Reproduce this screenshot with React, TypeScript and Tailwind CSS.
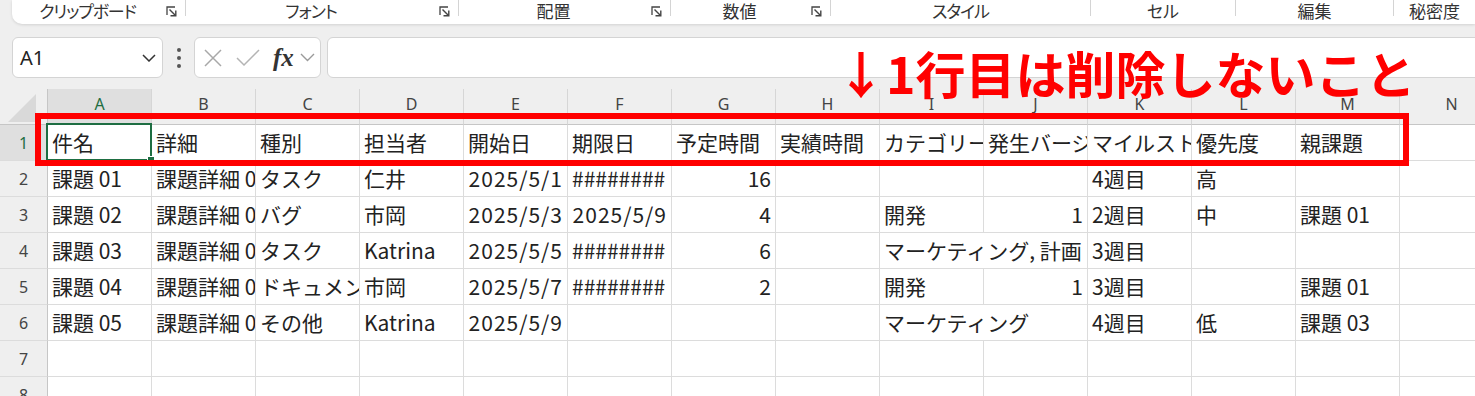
import React from "react";

type Cell = { t?: string; r?: boolean; span?: number; n?: boolean };

const COLS = ["A", "B", "C", "D", "E", "F", "G", "H", "I", "J", "K", "L", "M", "N"];
const H = "########";

const c = (t = "", r = false, span = 1): Cell => ({ t, r, span });
const d = (t: string): Cell => ({ t, r: true, span: 1, n: true });

const ROWS: Cell[][] = [
  [c("件名"), c("詳細"), c("種別"), c("担当者"), c("開始日"), c("期限日"), c("予定時間"), c("実績時間"), c("カテゴリー"), c("発生バージョン"), c("マイルストーン"), c("優先度"), c("親課題"), c()],
  [c("課題 01"), c("課題詳細 01"), c("タスク"), c("仁井"), d("2025/5/1"), c(H), c("16", true), c(), c(), c(), c("4週目"), c("高"), c(), c()],
  [c("課題 02"), c("課題詳細 02"), c("バグ"), c("市岡"), d("2025/5/3"), d("2025/5/9"), c("4", true), c(), c("開発"), c("1", true), c("2週目"), c("中"), c("課題 01"), c()],
  [c("課題 03"), c("課題詳細 03"), c("タスク"), c("Katrina"), d("2025/5/5"), c(H), c("6", true), c(), c("マーケティング, 計画", false, 2), c("3週目"), c(), c(), c()],
  [c("課題 04"), c("課題詳細 04"), c("ドキュメント"), c("市岡"), d("2025/5/7"), c(H), c("2", true), c(), c("開発"), c("1", true), c("3週目"), c(), c("課題 01"), c()],
  [c("課題 05"), c("課題詳細 05"), c("その他"), c("Katrina"), d("2025/5/9"), c(), c(), c(), c("マーケティング", false, 2), c("4週目"), c("低"), c("課題 03"), c()],
  COLS.map(() => c()),
  COLS.map(() => c()),
];

function Launcher() {
  return (
    <svg width="11" height="11" viewBox="0 0 11 11" className="shrink-0">
      <path d="M1 9V1h8" fill="none" stroke="#444" strokeWidth="1.3" />
      <path d="M3.5 3.5l6 6" fill="none" stroke="#444" strokeWidth="1.4" />
      <path d="M4.5 9.8h5.3V4.5" fill="none" stroke="#444" strokeWidth="1.4" />
    </svg>
  );
}

function Sep() {
  return <div className="w-px h-[16px] bg-[#d4d4d4] self-start shrink-0" />;
}

function Label({ children, className = "" }: { children: React.ReactNode; className?: string }) {
  return (
    <div
      className={`text-[17px] text-[#333] whitespace-nowrap leading-[20px] pb-[2px] ${className}`}
      style={{ fontFeatureSettings: '"palt"' }}
    >
      {children}
    </div>
  );
}

function Group({ label, w, icon = true, track = "" }: { label: string; w: string; icon?: boolean; track?: string }) {
  return (
    <div className={`flex items-center h-full shrink-0 ${w}`}>
      <Label className={`flex-1 text-center ${track}`}>{label}</Label>
      {icon && (
        <div className="mr-[8px] ml-[3px] flex items-center pb-[2px]">
          <Launcher />
        </div>
      )}
    </div>
  );
}

export default function App() {
  return (
    <div
      className="w-[1475px] h-[396px] overflow-hidden bg-[#efefef] relative"
      style={{ fontFamily: '"Noto Sans CJK JP", "Noto Sans", sans-serif' }}
    >
      {/* Ribbon */}
      <div className="ml-[12px] h-[24px] bg-white rounded-bl-[10px] flex shadow-[0_1px_3px_rgba(0,0,0,0.12)]">
        <Group label="クリップボード" w="w-[173px]" track="tracking-[-1.2px]" />
        <Sep />
        <Group label="フォント" w="w-[272px]" track="tracking-[-1px]" />
        <Sep />
        <Group label="配置" w="w-[211px]" />
        <Sep />
        <Group label="数値" w="w-[159px]" />
        <Sep />
        <Group label="スタイル" w="w-[259px]" icon={false} track="tracking-[-1px]" />
        <Sep />
        <Group label="セル" w="w-[144px]" icon={false} />
        <Sep />
        <Group label="編集" w="w-[157px]" icon={false} />
        <Sep />
        <div className="flex items-center h-full pl-[15px]">
          <Label>秘密度</Label>
        </div>
      </div>

      {/* Formula bar */}
      <div className="mt-[13px] h-[41px] flex items-stretch">
        <div className="ml-[12px] w-[151px] shrink-0 bg-white border border-[#d4d4d4] rounded-[6px] flex items-center pl-[7px] pr-[6px]">
          <span className="text-[20px] text-[#222]" style={{ fontFamily: '"Noto Sans", sans-serif' }}>A1</span>
          <svg width="14" height="8" viewBox="0 0 14 8" className="ml-auto">
            <path d="M1 1l6 6 6-6" fill="none" stroke="#333" strokeWidth="1.5" />
          </svg>
        </div>
        <div className="w-[31px] shrink-0 flex flex-col items-center justify-center gap-[4px]">
          <div className="w-[4px] h-[4px] rounded-full bg-[#555]" />
          <div className="w-[4px] h-[4px] rounded-full bg-[#555]" />
          <div className="w-[4px] h-[4px] rounded-full bg-[#555]" />
        </div>
        <div className="w-[127px] shrink-0 bg-white border border-[#d4d4d4] rounded-[6px] flex items-center pl-[9px]">
          <svg width="18" height="18" viewBox="0 0 18 18">
            <path d="M1 1l16 16M17 1L1 17" fill="none" stroke="#a8a8a8" strokeWidth="1.5" />
          </svg>
          <svg width="24" height="18" viewBox="0 0 24 18" className="ml-[14px]">
            <path d="M1 9l7 7L23 1" fill="none" stroke="#b4b4b4" strokeWidth="1.5" />
          </svg>
          <span
            className="ml-[13px] text-[25px] italic font-bold text-[#333] leading-none"
            style={{ fontFamily: '"Liberation Serif", serif' }}
          >
            fx
          </span>
          <svg width="15" height="9" viewBox="0 0 15 9" className="ml-[6px]">
            <path d="M1 1l6.5 6.5L14 1" fill="none" stroke="#9a9a9a" strokeWidth="1.4" />
          </svg>
        </div>
        <div className="ml-[6px] w-[1200px] shrink-0 bg-white border border-[#d4d4d4] rounded-[6px]" />
      </div>

      {/* Grid */}
      <div className="mt-[11px] grid grid-cols-[48px_repeat(14,104px)] bg-white">
        {/* header row */}
        <div className="h-[36px] bg-[#efefef] border-r border-b border-[#c6c6c6] flex items-center justify-center">
          <svg width="30" height="30" viewBox="0 0 30 30" className="ml-[-3px] mt-[2px]">
            <path d="M29 1V29H1Z" fill="#d9d9d9" />
          </svg>
        </div>
        {COLS.map((col) => (
          <div
            key={col}
            className={`h-[36px] border-r border-r-[#d6d6d6] border-b border-b-[#c6c6c6] flex items-center justify-center pb-[5px] text-[16px] ${
              col === "A" ? "bg-[#dfdfdf] text-[#1e6e42]" : "bg-[#efefef] text-[#444]"
            }`}
            style={{ fontFamily: '"Noto Sans", sans-serif' }}
          >
            {col}
          </div>
        ))}

        {ROWS.map((row, ri) => (
          <React.Fragment key={ri}>
            <div
              className={`h-[36px] border-r border-r-[#c6c6c6] border-b border-b-[#dcdcdc] flex items-center justify-center text-[16px] ${
                ri === 0 ? "bg-[#dfdfdf] text-[#1e6e42]" : "bg-[#efefef] text-[#444]"
              }`}
              style={{ fontFamily: '"Noto Sans", sans-serif' }}
            >
              {ri + 1}
            </div>
            {row.map((cell, ci) => (
              <div
                key={ci}
                className={`h-[36px] border-r border-b border-[#dcdcdc] flex items-center overflow-hidden whitespace-nowrap text-[21px] text-[#222] px-[4px] ${
                  cell.r ? "justify-end" : "justify-start"
                } ${cell.span === 2 ? "col-span-2" : ""} ${cell.n ? "tracking-[1px]" : ""}`}
              >
                {cell.t}
              </div>
            ))}
          </React.Fragment>
        ))}
      </div>

      {/* selection outline + handle */}
      <div className="absolute left-[46px] top-[123px] w-[106px] h-[38px] border-2 border-[#1e6e42]" />
      <div className="absolute left-[148px] top-[157px] w-[6px] h-[6px] bg-[#1e6e42] outline outline-1 outline-white" />

      {/* Annotation */}
      <div className="absolute left-[35px] top-[113px] w-[1374px] h-[53px] border-[6px] border-[#ff0000]" />
      <div className="absolute left-[836px] top-[47px] text-[50px] font-bold text-[#ff0000] leading-none whitespace-nowrap">
        ↓1行目は削除しないこと
      </div>
    </div>
  );
}
